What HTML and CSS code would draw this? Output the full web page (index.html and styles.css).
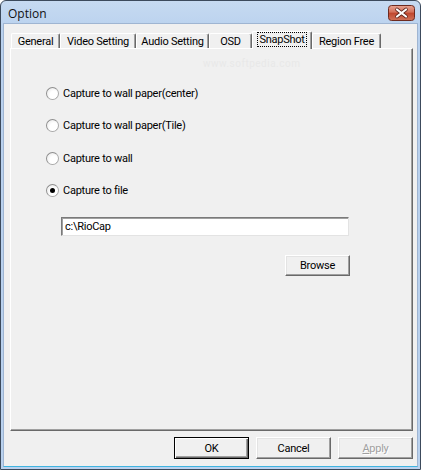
FILE: index.html
```html
<!DOCTYPE html>
<html>
<head>
<meta charset="utf-8">
<link rel="stylesheet" href="styles.css">
</head>
<body>
<div class="window">
  <div class="titlebar">
    <span class="title">Option</span>
    <span class="close">
      <svg width="27" height="16" viewBox="0 0 27 16">
        <defs>
          <linearGradient id="cg" x1="0" y1="0" x2="0" y2="1">
            <stop offset="0" stop-color="#e8a493"/>
            <stop offset="0.45" stop-color="#d3705a"/>
            <stop offset="0.5" stop-color="#c0462d"/>
            <stop offset="1" stop-color="#d0735a"/>
          </linearGradient>
        </defs>
        <rect x="0.5" y="0.5" width="26" height="15" rx="3" fill="url(#cg)" stroke="#6d2a1f"/>
        <path d="M9 4.5 L18 11.5 M18 4.5 L9 11.5" stroke="#5a2219" stroke-width="3.6" stroke-linecap="round"/>
        <path d="M9 4.5 L18 11.5 M18 4.5 L9 11.5" stroke="#ffffff" stroke-width="2.2" stroke-linecap="round"/>
      </svg>
    </span>
  </div>
  <div class="client">
    <div class="tabs">
      <div class="tab t1">General</div>
      <div class="tab t2">Video Setting</div>
      <div class="tab t3">Audio Setting</div>
      <div class="tab t4">OSD</div>
      <div class="tab t5 active"><span class="focus">SnapShot</span></div>
      <div class="tab t6">Region Free</div>
    </div>
    <div class="panel">
      <div class="watermark">www.softpedia.com</div>
      <div class="options">
        <label class="radio"><span class="dot"></span>Capture to wall paper(center)</label>
        <label class="radio"><span class="dot"></span>Capture to wall paper(Tile)</label>
        <label class="radio"><span class="dot"></span>Capture to wall</label>
        <label class="radio"><span class="dot checked"></span>Capture to file</label>
      </div>
      <div class="field">c:\RioCap</div>
      <div class="browse-row"><div class="btn browse">Browse</div></div>
    </div>
    <div class="buttons">
      <div class="btn main">OK</div>
      <div class="btn">Cancel</div>
      <div class="btn disabled"><u>A</u>pply</div>
    </div>
  </div>
</div>
</body>
</html>
```
FILE: styles.css
```css
html, body {
  margin: 0;
  padding: 0;
  width: 421px;
  height: 470px;
  overflow: hidden;
  background: #ffffff;
}
.window {
  box-sizing: border-box;
  width: 421px;
  height: 470px;
  border: 1px solid #3c4a5c;
  border-radius: 6px 6px 0 0;
  background: linear-gradient(#c6daf1, #b9d1ee 30px, #b9d1ee);
  padding: 0 2px 2px 2px;
  display: flex;
  flex-direction: column;
  font-family: Roboto, "Liberation Sans", Arial, sans-serif;
  font-size: 11px;
  letter-spacing: -0.25px;
  color: #000;
}
.titlebar {
  height: 22px;
  display: flex;
  align-items: center;
  justify-content: space-between;
  padding: 0 3px 0 5px;
}
.title {
  font-family: "Open Sans", "DejaVu Sans", sans-serif;
  font-size: 12px;
  letter-spacing: 0;
  color: #111;
  margin-top: 2px;
}
.close {
  display: flex;
  margin-top: 2px;
}
.client {
  flex: 1;
  background: #f0f0f0;
  border-top: 1px solid #9fb5d2;
  border-left: 1px solid #9fb5d2;
  border-right: 1px solid #9fb5d2;
  border-bottom: 1px solid #3fb4e0;
  padding: 7px 4px 0 6px;
  display: flex;
  flex-direction: column;
}
.tabs {
  display: flex;
  align-items: flex-end;
  height: 17px;
  padding-left: 1px;
  position: relative;
  z-index: 1;
}
.tab {
  height: 15px;
  box-sizing: border-box;
  border-top: 1px solid #ffffff;
  border-left: 1px solid #ffffff;
  border-right: 1px solid #696969;
  box-shadow: inset -1px 0 0 #a0a0a0;
  border-radius: 2px 2px 0 0;
  display: flex;
  align-items: center;
  justify-content: center;
  line-height: 13px;
}
.t1 { width: 49px; }
.t2 { width: 76px; }
.t3 { width: 73px; }
.t4 { width: 43px; }
.t5 { width: 60px; }
.t6 { width: 69px; }
.tab.active {
  height: 18px;
  margin-bottom: -1px;
  background: #f0f0f0;
  align-items: flex-start;
  padding-top: 1px;
}
.focus {
  outline: 1px dotted #000;
  padding: 0 1px;
  line-height: 13px;
}
.panel {
  position: relative;
  box-sizing: border-box;
  height: 383px;
  width: 403px;
  border-top: 1px solid #ffffff;
  border-left: 1px solid #ffffff;
  border-right: 1px solid #696969;
  border-bottom: 1px solid #696969;
  box-shadow: inset -1px -1px 0 #a0a0a0;
  padding: 38px 0 0 35px;
  display: flex;
  flex-direction: column;
}
.watermark {
  position: absolute;
  left: 192px;
  top: 9px;
  color: #e8e8e8;
  font-size: 10px;
  letter-spacing: 0.5px;
}
.options {
  display: flex;
  flex-direction: column;
  gap: 19.3px;
}
.radio {
  display: flex;
  align-items: center;
  height: 13px;
  gap: 4px;
}
.dot {
  width: 11px;
  height: 11px;
  border-radius: 50%;
  border: 1px solid #a9a9a9;
  border-top-color: #8e8e8e;
  border-left-color: #8e8e8e;
  background: radial-gradient(circle at 65% 65%, #ffffff 40%, #e4e4e4 100%);
  position: relative;
}
.dot.checked::after {
  content: "";
  position: absolute;
  left: 3px;
  top: 3px;
  width: 5px;
  height: 5px;
  border-radius: 50%;
  background: #000;
}
.field {
  margin: 20px 0 0 15px;
  box-sizing: border-box;
  width: 288px;
  height: 19px;
  background: #fff;
  border-top: 1px solid #7a7a7a;
  border-left: 1px solid #7a7a7a;
  border-right: 1px solid #e3e3e3;
  border-bottom: 1px solid #e3e3e3;
  box-shadow: inset 1px 1px 0 #a0a0a0;
  padding: 2px 0 0 3px;
  line-height: 13px;
}
.browse-row {
  display: flex;
  margin: 19px 0 0 239px;
}
.btn {
  box-sizing: border-box;
  width: 75px;
  height: 22px;
  display: flex;
  align-items: center;
  justify-content: center;
  background: #f0f0f0;
  border-top: 1px solid #ffffff;
  border-left: 1px solid #ffffff;
  border-right: 1px solid #696969;
  border-bottom: 1px solid #696969;
  box-shadow: inset -1px -1px 0 #a0a0a0, inset 1px 1px 0 #e3e3e3;
}
.btn.browse {
  width: 65px;
  height: 21px;
}
.btn.main {
  border: 1px solid #000;
  box-shadow: inset 1px 1px 0 #ffffff, inset -1px -1px 0 #696969, inset -2px -2px 0 #a0a0a0;
}
.btn.disabled {
  color: #a0a0a0;
  text-shadow: 1px 1px 0 #ffffff;
}
.buttons {
  display: flex;
  justify-content: flex-end;
  gap: 7px;
  margin-top: 6px;
}
```
